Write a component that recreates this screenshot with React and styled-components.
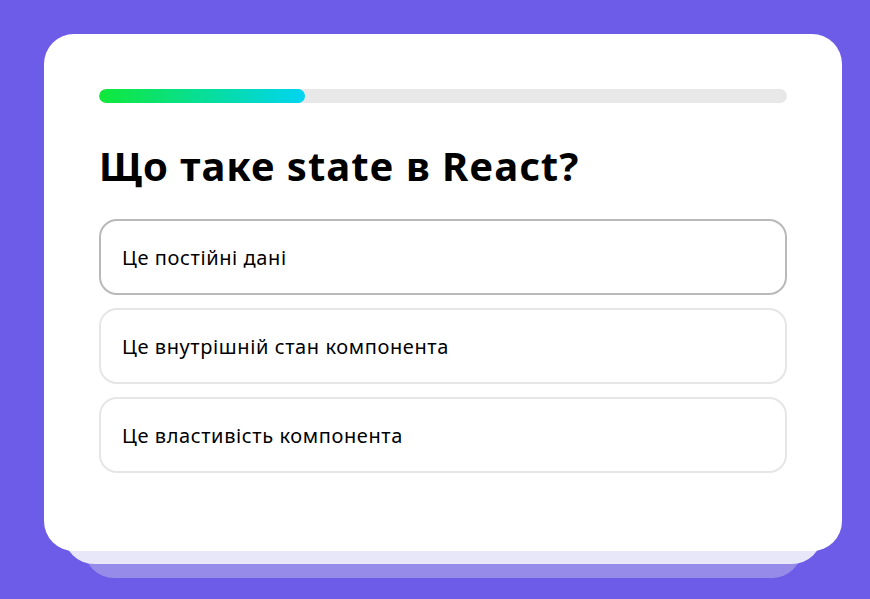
import React from 'react';
import styled, { createGlobalStyle } from 'styled-components';

const GlobalStyle = createGlobalStyle`
  html, body {
    margin: 0;
    padding: 0;
    background: #6c5ce7;
    font-family: 'Noto Sans', 'Open Sans', sans-serif;
  }
`;

const Page = styled.div`
  min-height: 599px;
  box-sizing: border-box;
  padding: 34px 28px 0 44px;
`;

const Stack = styled.div`
  position: relative;
  width: 798px;
`;

const Layer = styled.div`
  position: absolute;
  left: ${p => p.inset}px;
  right: ${p => p.inset}px;
  top: 0;
  bottom: ${p => -p.drop}px;
  border-radius: 30px;
  background: ${p => p.color};
`;

const Card = styled.div`
  position: relative;
  background: #fff;
  border-radius: 30px;
  padding: 55px 55px 78px;
`;

const Progress = styled.div`
  height: 14px;
  border-radius: 7px;
  background: #e8e8e8;
  overflow: hidden;
`;

const Fill = styled.div`
  height: 100%;
  border-radius: 7px;
  background: linear-gradient(90deg, #10e83a 0%, #00d4f2 100%);
`;

const Title = styled.h1`
  margin: 39px 0 29px;
  font-size: 40px;
  line-height: 48px;
  letter-spacing: 1px;
  font-weight: 700;
  color: #000;
`;

const Options = styled.div`
  display: flex;
  flex-direction: column;
  gap: 13px;
`;

const Option = styled.div`
  box-sizing: border-box;
  height: 76px;
  display: flex;
  align-items: center;
  padding: 0 21px;
  border: 2px solid ${p => (p.active ? '#b9b9b9' : '#e6e6e6')};
  border-radius: 18px;
  font-size: 20px;
  letter-spacing: 0.6px;
  color: #000;
`;

const options = [
  'Це постійні дані',
  'Це внутрішній стан компонента',
  'Це властивість компонента',
];

export default function App() {
  const progress = 30;
  return (
    <Page>
      <GlobalStyle />
      <Stack>
        <Layer inset={40} drop={27} color="#978be9" />
        <Layer inset={20} drop={13} color="#e8e6f9" />
        <Card>
          <Progress>
            <Fill style={{ width: `${progress}%` }} />
          </Progress>
          <Title>Що таке state в React?</Title>
          <Options>
            {options.map((o, i) => (
              <Option key={o} active={i === 0}>{o}</Option>
            ))}
          </Options>
        </Card>
      </Stack>
    </Page>
  );
}
